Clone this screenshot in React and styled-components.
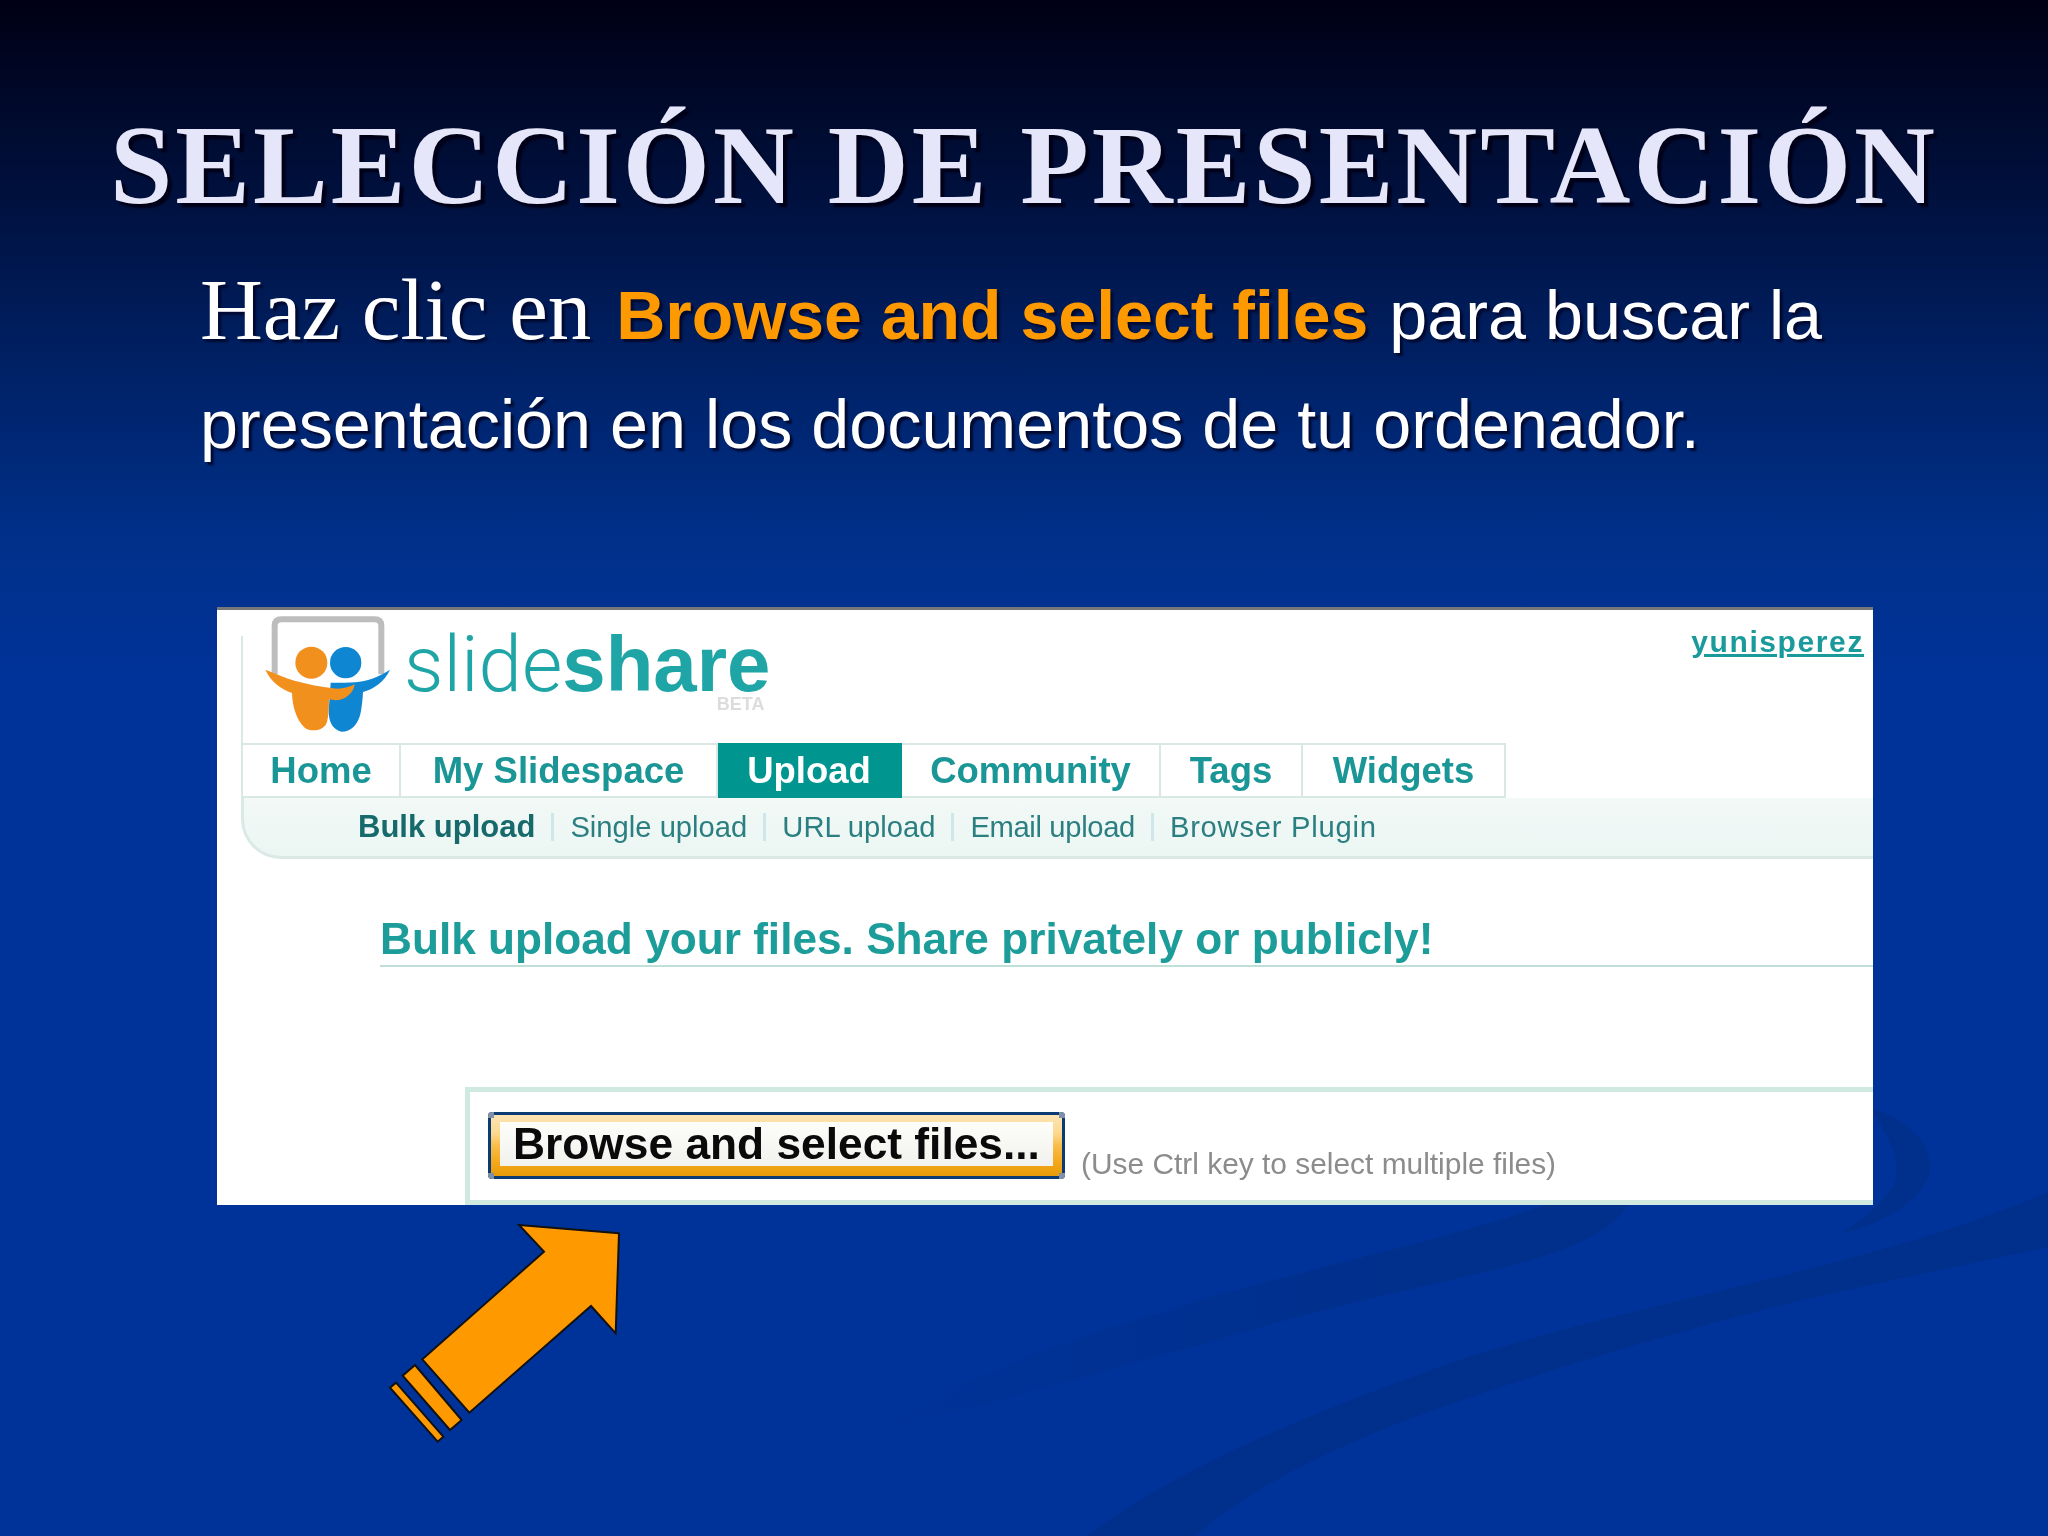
import React from 'react';
import styled, { createGlobalStyle } from 'styled-components';

const Global = createGlobalStyle`
  html, body {
    margin: 0;
    padding: 0;
    background: #003399;
  }
`;

const Slide = styled.div`
  position: relative;
  width: 2048px;
  height: 1536px;
  overflow: hidden;
  background: linear-gradient(180deg, #000014 0, #00113f 200px, #002268 380px, #00308a 540px, #003399 680px, #003399 100%);
  font-family: 'Liberation Sans', Arial, sans-serif;
`;

const Waves = styled.svg`
  position: absolute;
  left: 0;
  top: 0;
  width: 2048px;
  height: 1536px;
`;

const Content = styled.div`
  position: relative;
  display: flex;
  flex-direction: column;
`;

const Title = styled.h1`
  margin: 0;
  padding-top: 100px;
  text-align: center;
  font-family: 'Liberation Serif', 'Times New Roman', serif;
  font-size: 112px;
  line-height: 130px;
  letter-spacing: 3px;
  font-weight: 700;
  color: #e6e6fa;
  white-space: nowrap;
  text-shadow: 4px 4px 2px #000018;
`;

const Body = styled.p`
  margin: 0;
  padding: 25px 0 0 200px;
  font-size: 68.3px;
  line-height: 109px;
  color: #fff;
  white-space: nowrap;
  text-shadow: 3px 3px 2px #000a30;
`;

const SerifWords = styled.span`
  font-family: 'Liberation Serif', 'Times New Roman', serif;
  font-size: 87px;
`;

const Accent = styled.strong`
  color: #ff9900;
  font-size: 68px;
  margin: 0 2px 0 6px;
`;

const Panel = styled.section`
  box-sizing: border-box;
  width: 1656px;
  height: 598px;
  margin: 128px 0 0 217px;
  background: #fff;
  border-top: 3px solid #777;
  display: flex;
  flex-direction: column;
  overflow: hidden;
  filter: blur(0.6px);
`;

const Header = styled.header`
  box-sizing: border-box;
  height: 133px;
  margin-left: 24px;
  display: flex;
  background: linear-gradient(90deg, #dbe9e6 2px, transparent 2px) 0 26px no-repeat;
`;

const Logo = styled.svg`
  width: 140px;
  height: 128px;
  margin: 1px 2px 0 17px;
  flex: none;
`;

const Wordmark = styled.div`
  position: relative;
  margin: 8px 0 0 4px;
  height: 92px;
  font-size: 78px;
  line-height: 92px;
  color: #1fa5a5;
  white-space: nowrap;
`;

const Thin = styled.span`
  font-family: Roboto, 'Liberation Sans', sans-serif;
  font-weight: 300;
`;

const Bold = styled.span`
  font-weight: 700;
`;

const Beta = styled.span`
  position: absolute;
  right: 6px;
  bottom: -4px;
  font-size: 18px;
  line-height: 20px;
  font-weight: 700;
  color: #dcdcdc;
`;

const UserLink = styled.a`
  margin: 16px 9px 0 auto;
  align-self: flex-start;
  font-size: 30px;
  line-height: 32px;
  font-weight: 700;
  letter-spacing: 1.6px;
  color: #1a9a9a;
  text-decoration: underline;
`;

const TabBar = styled.nav`
  display: flex;
  height: 55px;
  margin-left: 24px;
`;

const Tab = styled.a`
  box-sizing: border-box;
  width: ${p => p.$w}px;
  display: flex;
  align-items: center;
  justify-content: center;
  font-size: 36.5px;
  font-weight: 700;
  color: ${p => (p.$active ? '#fff' : '#1a9696')};
  background: ${p => (p.$active ? '#00968f' : '#fff')};
  border: 2px solid ${p => (p.$active ? '#00968f' : '#d9e8e5')};
  border-left-width: ${p => (p.$first ? 2 : 0)}px;
`;

const SubNav = styled.div`
  box-sizing: border-box;
  height: 61px;
  margin-left: 24px;
  padding: 0 0 0 114px;
  display: flex;
  align-items: center;
  color: #2b7f80;
  white-space: nowrap;
  background: linear-gradient(180deg, #f2f9f7 0%, #ebf6f3 100%);
  border-left: 3px solid #dbe9e6;
  border-bottom: 3px solid #dbe9e6;
  border-bottom-left-radius: 40px;
`;

const SubLink = styled.a`
  font-size: ${p => (p.$current ? 31 : 29.2)}px;
  font-weight: ${p => (p.$current ? 700 : 400)};
  letter-spacing: ${p => p.$ls || 0}px;
  color: ${p => (p.$current ? '#176a6c' : '#2b7f80')};
`;

const Sep = styled.span`
  width: 3px;
  height: 28px;
  margin: 0 16px;
  background: #cfe6ea;
`;

const Heading = styled.h2`
  margin: 54px 0 0 163px;
  padding-bottom: 1px;
  font-size: 44.2px;
  line-height: 51px;
  font-weight: 700;
  color: #1d9d9a;
  white-space: nowrap;
  border-bottom: 2px solid #bfe0d8;
`;

const UploadBox = styled.div`
  box-sizing: border-box;
  flex: 1;
  margin: 120px 0 0 248px;
  padding: 20px 0 0 18px;
  display: flex;
  align-items: flex-start;
  gap: 16px;
  border: 5px solid #d0e9e1;
  border-right: 0;
`;

const BrowseButton = styled.button`
  position: relative;
  box-sizing: border-box;
  width: 577px;
  height: 67px;
  padding: 7px 9px 10px;
  background: linear-gradient(180deg, #fde4b4 0%, #fcd98f 30%, #f9bd4c 50%, #f3a71a 78%, #e89b08 100%);
  border: 3px solid #0a3b72;
  border-radius: 4px;
  display: flex;
  cursor: pointer;

  &::before {
    content: '';
    position: absolute;
    inset: -3px;
    background:
      linear-gradient(#7f90a8, #7f90a8) 0 0 / 6px 6px no-repeat,
      linear-gradient(#7f90a8, #7f90a8) 100% 0 / 6px 6px no-repeat,
      linear-gradient(#7f90a8, #7f90a8) 0 100% / 6px 6px no-repeat,
      linear-gradient(#7f90a8, #7f90a8) 100% 100% / 6px 6px no-repeat;
    border-radius: 4px;
  }
`;

const ButtonFace = styled.span`
  position: relative;
  flex: 1;
  display: flex;
  align-items: center;
  justify-content: center;
  background: linear-gradient(180deg, #fdfdf9 0%, #f1f1ed 100%);
  font-family: 'Liberation Sans', Arial, sans-serif;
  font-size: 44.3px;
  font-weight: 700;
  color: #0a0a0a;
  white-space: nowrap;
`;

const Hint = styled.span`
  margin-top: 35px;
  font-size: 29.9px;
  line-height: 34px;
  color: #8c8c8c;
  white-space: nowrap;
`;

const Arrow = styled.svg`
  width: 300px;
  height: 280px;
  margin-left: 370px;
  flex: none;
`;

const App = () => (
  <>
    <Global />
    <Slide>
      <Waves viewBox="0 0 2048 1536">
        <defs>
          <linearGradient id="fade" x1="850" y1="0" x2="1400" y2="0" gradientUnits="userSpaceOnUse">
            <stop offset="0" stopColor="#003399" />
            <stop offset="1" stopColor="#002f8c" />
          </linearGradient>
        </defs>
        <path
          fill="#002f8c"
          d="M2048 1192 C1880 1265 1650 1300 1468 1357 C1330 1405 1180 1465 1087 1536 L1195 1536 C1260 1480 1350 1440 1434 1410 C1560 1365 1700 1325 1802 1300 C1900 1278 1980 1262 2048 1247 Z"
        />
        <path
          fill="url(#fade)"
          d="M1632 1195 C1620 1240 1530 1262 1468 1276 C1380 1296 1300 1315 1234 1335 C1130 1365 1000 1400 850 1440 C950 1385 1060 1340 1170 1310 C1290 1270 1460 1240 1570 1195 Z"
        />
        <path
          fill="#002f8c"
          d="M1870 1108 C1910 1120 1932 1145 1930 1170 C1925 1200 1880 1225 1842 1233 C1870 1215 1892 1195 1896 1177 C1900 1155 1885 1130 1870 1108 Z"
        />
      </Waves>
      <Content>
        <Title>SELECCIÓN DE PRESENTACIÓN</Title>
        <Body>
          <SerifWords>Haz clic en</SerifWords> <Accent>Browse and select files</Accent> para buscar la
          <br />
          presentación en los documentos de tu ordenador.
        </Body>
        <Panel>
          <Header>
            <Logo viewBox="0 0 420 384">
              <path
                d="M50 190 L50 45 Q50 25 70 25 L350 25 Q370 25 370 45 L370 190"
                fill="none"
                stroke="#bdbdbd"
                strokeWidth="18"
              />
              <circle cx="263" cy="155" r="47" fill="#0f86d2" />
              <path
                fill="#0f86d2"
                d="M396 176 C370 192 340 208 305 212 C280 216 240 215 218 215 L212 300 C212 330 222 355 250 362 C280 362 300 340 308 305 C312 285 314 262 315 243 C345 235 380 212 396 176 Z"
              />
              <circle cx="160" cy="155" r="48" fill="#f2901e" />
              <path
                fill="#f2901e"
                d="M22 176 C50 186 80 200 112 210 C150 220 190 228 225 232 C245 235 268 232 290 220 C288 245 262 268 232 268 L213 265 C213 290 212 320 205 338 C195 358 160 365 140 350 C118 330 103 290 102 246 C70 235 38 212 22 176 Z"
              />
            </Logo>
            <Wordmark>
              <Thin>slide</Thin>
              <Bold>share</Bold>
              <Beta>BETA</Beta>
            </Wordmark>
            <UserLink>yunisperez</UserLink>
          </Header>
          <TabBar>
            <Tab $w={160} $first>Home</Tab>
            <Tab $w={317}>My Slidespace</Tab>
            <Tab $w={184} $active>Upload</Tab>
            <Tab $w={259}>Community</Tab>
            <Tab $w={142}>Tags</Tab>
            <Tab $w={203}>Widgets</Tab>
          </TabBar>
          <SubNav>
            <SubLink $current>Bulk upload</SubLink>
            <Sep />
            <SubLink>Single upload</SubLink>
            <Sep />
            <SubLink>URL upload</SubLink>
            <Sep />
            <SubLink $ls={-0.35}>Email upload</SubLink>
            <Sep />
            <SubLink $ls={0.75}>Browser Plugin</SubLink>
          </SubNav>
          <Heading>Bulk upload your files. Share privately or publicly!</Heading>
          <UploadBox>
            <BrowseButton>
              <ButtonFace>Browse and select files...</ButtonFace>
            </BrowseButton>
            <Hint>(Use Ctrl key to select multiple files)</Hint>
          </UploadBox>
        </Panel>
        <Arrow viewBox="0 405 900 840">
          <g fill="#ff9900" stroke="#111" strokeWidth="6" strokeLinejoin="miter">
            <polygon points="747,490 447,465 522,545 157,868 298,1028 663,708 737,790" />
            <polygon points="135,885 275,1050 240,1080 98,917" />
            <polygon points="78,938 220,1100 203,1115 60,953" />
          </g>
        </Arrow>
      </Content>
    </Slide>
  </>
);

export default App;
